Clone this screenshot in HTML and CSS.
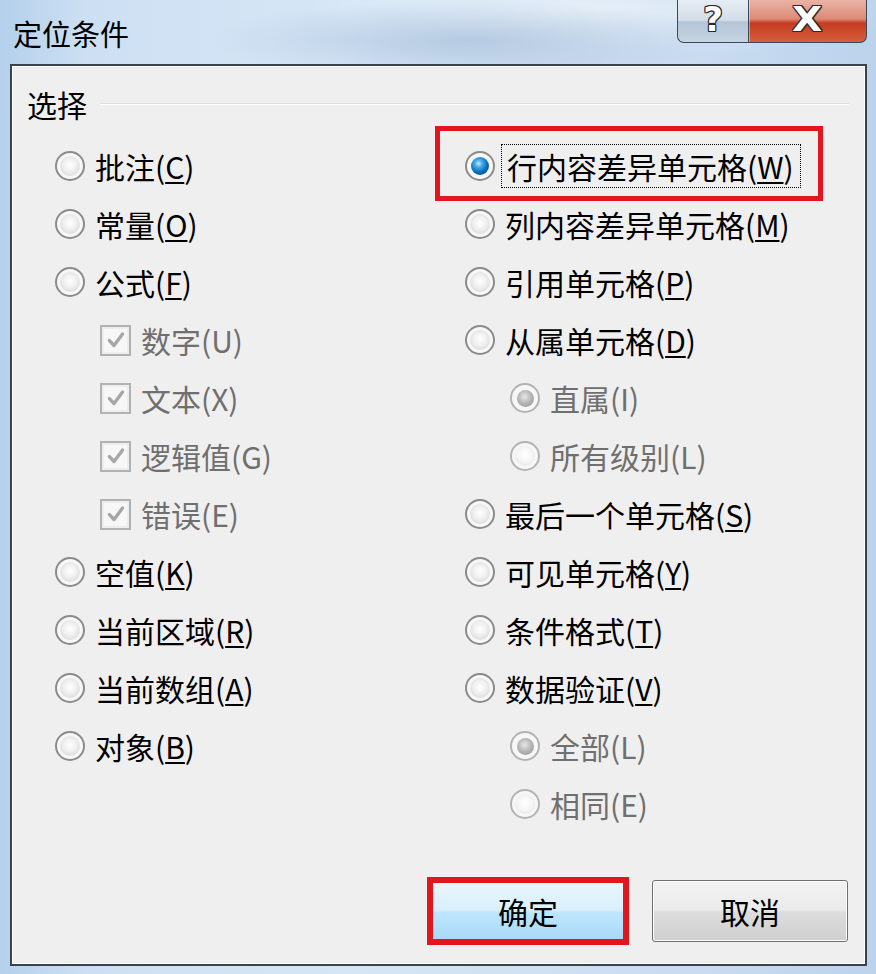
FILE: index.html
```html
<!DOCTYPE html>
<html lang="zh-CN">
<head>
<meta charset="utf-8">
<title>定位条件</title>
<link rel="stylesheet" href="styles.css">
</head>
<body>
<div class="window">
  <div class="titlebar">
    <div class="title">定位条件</div>
    <div class="controls">
      <div class="ctl help"><span class="glyph">?</span></div>
      <div class="ctl close"><span class="glyph">X</span></div>
    </div>
  </div>
  <div class="panel">
    <div class="group-head">
      <span class="group-label">选择</span>
      <span class="group-line"></span>
    </div>
    <div class="columns">
      <div class="col">
        <div class="row"><span class="radio"></span><span class="label">批注(<u>C</u>)</span></div>
        <div class="row"><span class="radio"></span><span class="label">常量(<u>O</u>)</span></div>
        <div class="row"><span class="radio"></span><span class="label">公式(<u>F</u>)</span></div>
        <div class="row sub"><span class="check"><svg viewBox="0 0 20 20" class="tick"><path d="M4 10.5 L8.2 15 L16 4.5"/></svg></span><span class="label dis">数字(U)</span></div>
        <div class="row sub"><span class="check"><svg viewBox="0 0 20 20" class="tick"><path d="M4 10.5 L8.2 15 L16 4.5"/></svg></span><span class="label dis">文本(X)</span></div>
        <div class="row sub"><span class="check"><svg viewBox="0 0 20 20" class="tick"><path d="M4 10.5 L8.2 15 L16 4.5"/></svg></span><span class="label dis">逻辑值(G)</span></div>
        <div class="row sub"><span class="check"><svg viewBox="0 0 20 20" class="tick"><path d="M4 10.5 L8.2 15 L16 4.5"/></svg></span><span class="label dis">错误(E)</span></div>
        <div class="row"><span class="radio"></span><span class="label">空值(<u>K</u>)</span></div>
        <div class="row"><span class="radio"></span><span class="label">当前区域(<u>R</u>)</span></div>
        <div class="row"><span class="radio"></span><span class="label">当前数组(<u>A</u>)</span></div>
        <div class="row"><span class="radio"></span><span class="label">对象(<u>B</u>)</span></div>
      </div>
      <div class="col">
        <div class="row marked"><span class="radio on"></span><span class="label focus">行内容差异单元格(<u>W</u>)</span><span class="redbox"></span></div>
        <div class="row"><span class="radio"></span><span class="label">列内容差异单元格(<u>M</u>)</span></div>
        <div class="row"><span class="radio"></span><span class="label">引用单元格(<u>P</u>)</span></div>
        <div class="row"><span class="radio"></span><span class="label">从属单元格(<u>D</u>)</span></div>
        <div class="row sub"><span class="radio dis on"></span><span class="label dis">直属(I)</span></div>
        <div class="row sub"><span class="radio dis"></span><span class="label dis">所有级别(L)</span></div>
        <div class="row"><span class="radio"></span><span class="label">最后一个单元格(<u>S</u>)</span></div>
        <div class="row"><span class="radio"></span><span class="label">可见单元格(<u>Y</u>)</span></div>
        <div class="row"><span class="radio"></span><span class="label">条件格式(<u>T</u>)</span></div>
        <div class="row"><span class="radio"></span><span class="label">数据验证(<u>V</u>)</span></div>
        <div class="row sub"><span class="radio dis on"></span><span class="label dis">全部(L)</span></div>
        <div class="row sub"><span class="radio dis"></span><span class="label dis">相同(E)</span></div>
      </div>
    </div>
    <div class="buttons">
      <div class="btn ok marked">确定<span class="redbox"></span></div>
      <div class="btn cancel">取消</div>
    </div>
  </div>
</div>
</body>
</html>
```
FILE: styles.css
```css
html, body {
  margin: 0;
  padding: 0;
}
body {
  width: 876px;
  height: 974px;
  overflow: hidden;
  font-family: "Noto Sans CJK SC", "Noto Sans", sans-serif;
  background: linear-gradient(to bottom, #cfe1f3 0%, #c3d9ef 60%, #a9c8e6 100%);
}
.window {
  height: 974px;
  display: flex;
  flex-direction: column;
  background:
    radial-gradient(ellipse 260px 40px at 470px 40px, rgba(120,150,190,0.35), rgba(120,150,190,0) 100%),
    radial-gradient(ellipse 300px 50px at 600px 10px, rgba(255,255,255,0.5), rgba(255,255,255,0) 100%),
    linear-gradient(to right, #b4d0ec 0%, #cde0f3 10%, #d6e6f5 40%, #c9dcf0 80%, #bcd3ec 100%);
}
.titlebar {
  height: 64px;
  display: flex;
  justify-content: space-between;
  align-items: flex-start;
  padding-right: 9px;
  flex-shrink: 0;
}
.title {
  font-size: 29px;
  line-height: 36px;
  padding: 15px 0 0 13px;
  color: #000;
}
.controls {
  display: flex;
}
.ctl {
  height: 42px;
  display: flex;
  align-items: center;
  justify-content: center;
  border: 1px solid #3d4856;
  border-top: none;
}
.help {
  width: 70px;
  border-radius: 0 0 0 7px;
  border-right: none;
  background: linear-gradient(to bottom, #e6edf4 0%, #d3dde7 48%, #b4c5d6 52%, #c6d4e2 100%);
}
.close {
  width: 117px;
  border-radius: 0 0 7px 0;
  background: linear-gradient(to bottom, #eab3a6 0%, #dd8a75 45%, #c53b1f 55%, #d4603f 100%);
  box-shadow: inset 1px 0 0 rgba(255,255,255,0.4);
}
.glyph {
  font-family: "DejaVu Sans", sans-serif;
  font-weight: bold;
  font-size: 34px;
  line-height: 34px;
  color: #fff;
  text-shadow: 1px 0 0 #2a2a2a, -1px 0 0 #2a2a2a, 0 1px 0 #2a2a2a, 0 -1px 0 #2a2a2a,
    1px 1px 0 #2a2a2a, -1px -1px 0 #2a2a2a, 1px -1px 0 #2a2a2a, -1px 1px 0 #2a2a2a;
  margin-top: -4px;
}
.close .glyph {
  transform: scaleX(1.15);
}
.panel {
  flex: 1;
  margin: 0 9px 8px 10px;
  border: 2px solid #39434e;
  background: #f0eff0;
  box-shadow: inset 0 0 0 1px #ffffff;
  display: flex;
  flex-direction: column;
}
.group-head {
  display: flex;
  align-items: center;
  padding: 20px 16px 0 15px;
}
.group-label {
  font-size: 30px;
  line-height: 36px;
  color: #000;
}
.group-line {
  flex: 1;
  height: 1px;
  background: #d5dfe5;
  border-bottom: 1px solid #ffffff;
  margin-left: 13px;
}
.columns {
  display: grid;
  grid-template-columns: 410px 1fr;
  margin-top: 15px;
}
.col {
  display: flex;
  flex-direction: column;
  padding-left: 43px;
}
.row {
  height: 58px;
  display: flex;
  align-items: center;
  position: relative;
}
.row.sub {
  padding-left: 45px;
}
.label {
  font-size: 30px;
  line-height: 40px;
  color: #000;
  margin-left: 10px;
  white-space: nowrap;
}
.label.dis {
  color: #6f6f6f;
}
.label u {
  text-decoration-thickness: 2px;
  text-underline-offset: 3px;
}
.label.focus {
  border: 1px dotted #000;
  padding: 1px 6px 1px 5px;
  margin-left: 6px;
}
.radio {
  width: 30px;
  height: 30px;
  box-sizing: border-box;
  border-radius: 50%;
  border: 2px solid #8b8b8b;
  background: #f7f7f7;
  display: flex;
  align-items: center;
  justify-content: center;
  flex-shrink: 0;
}
.radio::after {
  content: "";
  width: 20px;
  height: 20px;
  border-radius: 50%;
  background: radial-gradient(circle at 50% 45%, #ffffff 0%, #f1f1f1 40%, #cfcfcf 100%);
}
.radio.on::after {
  width: 18px;
  height: 18px;
  background: radial-gradient(circle at 42% 36%, #c8ecff 0%, #47b2f0 22%, #0f6db8 55%, #073f73 100%);
}
.radio.dis {
  border-color: #b3b3b3;
}
.radio.dis::after {
  background: radial-gradient(circle at 50% 45%, #ffffff 0%, #f6f6f6 45%, #e0e0e0 100%);
}
.radio.dis.on::after {
  width: 17px;
  height: 17px;
  background: radial-gradient(circle at 45% 40%, #e6e6e6 0%, #b4b4b4 50%, #8d8d8d 100%);
}
.check {
  width: 31px;
  height: 31px;
  box-sizing: border-box;
  border: 2px solid #b2b2b2;
  background: #f7f7f7;
  box-shadow: inset 0 0 0 2px #ededed;
  display: flex;
  align-items: center;
  justify-content: center;
  flex-shrink: 0;
}
.tick {
  width: 22px;
  height: 22px;
}
.tick path {
  fill: none;
  stroke: #a6a6a6;
  stroke-width: 3;
  stroke-linecap: round;
  stroke-linejoin: round;
}
.redbox {
  position: absolute;
  border: 5px solid #e2161f;
  pointer-events: none;
}
.row.marked .redbox {
  left: -30px;
  top: -11px;
  width: 378px;
  height: 65px;
}
.buttons {
  margin-top: auto;
  display: flex;
  justify-content: flex-end;
  gap: 26px;
  padding: 0 17px 22px 0;
}
.btn {
  width: 196px;
  height: 62px;
  box-sizing: border-box;
  border-radius: 3px;
  display: flex;
  align-items: center;
  justify-content: center;
  font-size: 30px;
  color: #000;
  position: relative;
}
.btn.ok {
  border: 1px solid #3c7fb1;
  background: linear-gradient(to bottom, #eaf6fd 0%, #d9f0fc 48%, #bee6fd 52%, #a7d9f5 100%);
  box-shadow: inset 0 0 0 2px #48d8fb;
}
.btn.cancel {
  border: 1px solid #707070;
  background: linear-gradient(to bottom, #f2f2f2 0%, #ebebeb 48%, #dddddd 52%, #cfcfcf 100%);
  box-shadow: inset 0 0 0 1px #fcfcfc;
}
.btn.marked .redbox {
  left: -4px;
  top: -4px;
  right: -4px;
  bottom: -4px;
  border-width: 6px;
}
```
